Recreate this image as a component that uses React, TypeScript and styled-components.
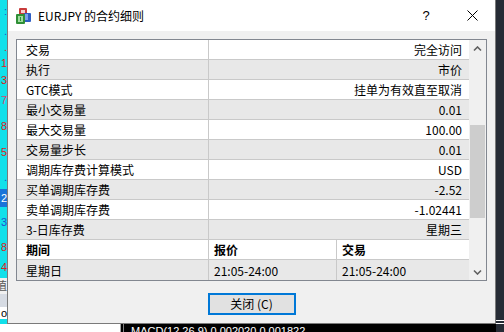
import React from 'react'
import styled, { createGlobalStyle } from 'styled-components'

const GlobalStyle = createGlobalStyle`
  html, body {
    margin: 0;
    padding: 0;
  }
  body {
    width: 504px;
    height: 332px;
    overflow: hidden;
    background: #000;
    font-family: "Noto Sans CJK SC", "Liberation Sans", sans-serif;
  }
`

const specs = [
  { label: '交易', value: '完全访问' },
  { label: '执行', value: '市价' },
  { label: 'GTC模式', value: '挂单为有效直至取消' },
  { label: '最小交易量', value: '0.01' },
  { label: '最大交易量', value: '100.00' },
  { label: '交易量步长', value: '0.01' },
  { label: '调期库存费计算模式', value: 'USD' },
  { label: '买单调期库存费', value: '-2.52' },
  { label: '卖单调期库存费', value: '-1.02441' },
  { label: '3-日库存费', value: '星期三' },
]

const ticks = [
  { h: 22, t: ':', c: '#2050d0' },
  { h: 18, t: '.', c: '#2050d0' },
  { h: 15, t: '.', c: '#e02020' },
  { h: 17, t: '1', c: '#e02020' },
  { h: 16, t: '3', c: '#e02020' },
  { h: 24, t: '7', c: '#e04070' },
  { h: 28, t: '8', c: '#e02020' },
  { h: 25, t: '5', c: '#e02020' },
  { h: 24, t: '.', c: '#2050d0' },
  { h: 18, t: '2', c: '#fff', bg: '#1a73d9' },
  { h: 30, t: '3', c: '#2050d0' },
  { h: 20, t: '8', c: '#e02020' },
  { h: 21, t: '4', c: '#e02020' },
  { h: 16, t: '值', c: '#555', bg: '#f0f0f0' },
  { h: 13, t: '', c: '#000', bg: '#d6dbe3' },
  { h: 12, t: 'o', c: '#000', bg: '#fff' },
]

function AppIcon() {
  return (
    <svg width="16" height="16" viewBox="0 0 16 16">
      <rect x="3" y="0" width="8" height="7" rx="1" fill="#c83c3c" />
      <rect x="5" y="2" width="4" height="3" fill="#f4d0d0" />
      <rect x="8" y="5" width="7" height="9" rx="1" fill="#2f5fc4" />
      <rect x="9" y="6" width="3" height="6" fill="#7aa0ea" />
      <rect x="0" y="6" width="9" height="10" rx="1" fill="#2f8f36" />
      <rect x="2" y="8" width="5" height="6" fill="#9fdc9f" />
      <rect x="4" y="9" width="1" height="4" fill="#2f8f36" />
    </svg>
  )
}

function Chevron({ down }: { down?: boolean }) {
  return (
    <svg width="9" height="6" viewBox="0 0 9 6">
      <path
        d={down ? 'M1 1.5 L4.5 5 L8 1.5' : 'M1 4.5 L4.5 1 L8 4.5'}
        fill="none"
        stroke="#606060"
        strokeWidth="1.6"
      />
    </svg>
  )
}

export default function App() {
  return (
    <>
      <GlobalStyle />
      <Desktop>
        <PriceScale>
          {ticks.map((tk, i) => (
            <Tick key={i} $h={tk.h} $color={tk.c} $bg={tk.bg}>
              {tk.t}
            </Tick>
          ))}
        </PriceScale>

        <Dialog>
          <TitleBar>
            <AppIcon />
            <TitleText>EURJPY 的合约细则</TitleText>
            <TitleButton>?</TitleButton>
            <TitleButton>
              <svg width="11" height="11" viewBox="0 0 11 11">
                <path d="M0.5 0.5 L10.5 10.5 M10.5 0.5 L0.5 10.5" stroke="#000" strokeWidth="1" />
              </svg>
            </TitleButton>
          </TitleBar>

          <Body>
            <Frame>
              <Rows>
                {specs.map((s, i) => (
                  <SpecRow key={s.label} $alt={i % 2 === 1}>
                    <LabelCell>{s.label}</LabelCell>
                    <ValueCell>{s.value}</ValueCell>
                  </SpecRow>
                ))}
                <PeriodRow>
                  <PeriodCell $bold $first>期间</PeriodCell>
                  <PeriodCell $bold>报价</PeriodCell>
                  <PeriodCell $bold $last>交易</PeriodCell>
                </PeriodRow>
                <PeriodRow $alt $end>
                  <PeriodCell $first>星期日</PeriodCell>
                  <PeriodCell>21:05-24:00</PeriodCell>
                  <PeriodCell $last>21:05-24:00</PeriodCell>
                </PeriodRow>
              </Rows>
              <ScrollBar>
                <ArrowButton>
                  <Chevron />
                </ArrowButton>
                <Track>
                  <Thumb />
                </Track>
                <ArrowButton>
                  <Chevron down />
                </ArrowButton>
              </ScrollBar>
            </Frame>
            <CloseButton>关闭 (C)</CloseButton>
          </Body>
        </Dialog>

        <SideStrip>
          <Lines />
        </SideStrip>

        <BottomBar>
          <WhitePane />
          <ChartPane>MACD(12,26,9) 0.002020 0.001822</ChartPane>
        </BottomBar>
      </Desktop>
    </>
  )
}

const Desktop = styled.div`
  display: grid;
  grid-template-columns: 7px 489px 8px;
  grid-template-rows: 324px 8px;
  width: 504px;
  height: 332px;
  overflow: hidden;
`

const PriceScale = styled.div`
  display: flex;
  flex-direction: column;
  background: #12e0ea;
  overflow: hidden;
`

const Tick = styled.div<{ $h: number; $color: string; $bg?: string }>`
  height: ${(p) => p.$h}px;
  flex: none;
  display: flex;
  align-items: center;
  justify-content: flex-end;
  color: ${(p) => p.$color};
  background: ${(p) => p.$bg || 'transparent'};
  font: 11px "Liberation Sans", "Noto Sans CJK SC", sans-serif;
  line-height: 1;
  overflow: hidden;
`

const Dialog = styled.div`
  display: flex;
  flex-direction: column;
  background: #f0f0f0;
  border: 1px solid #7a7a7a;
  border-top: none;
  min-height: 0;
`

const TitleBar = styled.div`
  height: 31px;
  flex: none;
  display: flex;
  align-items: center;
  background: #fff;
  padding-left: 8px;
`

const TitleText = styled.div`
  flex: 1;
  margin-left: 6px;
  font-size: 12px;
  color: #000;
  line-height: 1;
`

const TitleButton = styled.div`
  width: 46px;
  height: 31px;
  display: flex;
  align-items: center;
  justify-content: center;
  font: 13px "Liberation Sans", sans-serif;
  color: #000;
`

const Body = styled.div`
  flex: 1;
  display: flex;
  flex-direction: column;
  padding: 8px 8px 8px;
`

const Frame = styled.div`
  height: 242px;
  display: flex;
  border: 1px solid #828790;
  background: #fff;
  box-sizing: border-box;
`

const Rows = styled.div`
  flex: 1;
  display: flex;
  flex-direction: column;
`

const SpecRow = styled.div<{ $alt?: boolean }>`
  height: 20px;
  flex: none;
  display: grid;
  grid-template-columns: 192px 1fr;
  background: ${(p) => (p.$alt ? '#e8e8e8' : '#fff')};
  border-bottom: 1px solid #c9c9c9;
  box-sizing: border-box;
  font-size: 12px;
  color: #000;
`

const LabelCell = styled.div`
  display: flex;
  align-items: center;
  padding-left: 9px;
  border-right: 1px solid #c9c9c9;
  white-space: nowrap;
`

const ValueCell = styled.div`
  display: flex;
  align-items: center;
  justify-content: flex-end;
  padding-right: 7px;
  white-space: nowrap;
`

const PeriodRow = styled.div<{ $alt?: boolean; $end?: boolean }>`
  height: 20px;
  flex: none;
  display: grid;
  grid-template-columns: 192px 128px 1fr;
  background: ${(p) => (p.$alt ? '#e8e8e8' : '#fff')};
  border-bottom: ${(p) => (p.$end ? 'none' : '1px solid #c9c9c9')};
  box-sizing: border-box;
  font-size: 12px;
  color: #000;
`

const PeriodCell = styled.div<{ $bold?: boolean; $first?: boolean; $last?: boolean }>`
  display: flex;
  align-items: center;
  padding-left: ${(p) => (p.$first ? 9 : 5)}px;
  font-weight: ${(p) => (p.$bold ? 700 : 400)};
  border-right: ${(p) => (p.$last ? 'none' : '1px solid #c9c9c9')};
  white-space: nowrap;
`

const ScrollBar = styled.div`
  width: 17px;
  flex: none;
  display: flex;
  flex-direction: column;
  background: #f0f0f0;
`

const ArrowButton = styled.div`
  height: 17px;
  flex: none;
  display: flex;
  align-items: center;
  justify-content: center;
`

const Track = styled.div`
  flex: 1;
  padding-top: 68px;
`

const Thumb = styled.div`
  height: 93px;
  margin: 0 1px;
  background: #cdcdcd;
`

const CloseButton = styled.button`
  align-self: center;
  width: 88px;
  height: 22px;
  margin-top: 12px;
  padding: 0;
  border: 2px solid #0078d7;
  background: #e1e1e1;
  color: #000;
  font: 12px "Noto Sans CJK SC", "Liberation Sans", sans-serif;
  line-height: 1;
`

const SideStrip = styled.div`
  grid-row: 1 / 3;
  grid-column: 3;
  background: #262b35;
  display: flex;
  flex-direction: column;
  justify-content: flex-end;
  padding-bottom: 8px;
`

const Lines = styled.div`
  height: 2px;
  border-top: 1px solid #fff;
  border-bottom: 1px solid #fff;
`

const BottomBar = styled.div`
  grid-row: 2;
  grid-column: 1 / 3;
  display: flex;
  overflow: hidden;
`

const WhitePane = styled.div`
  width: 120px;
  flex: none;
  background: #fff;
  border-right: 1px solid #a0a0a0;
`

const ChartPane = styled.div`
  flex: 1;
  background: #000;
  border-left: 2px solid #000;
  box-shadow: inset 1px 0 0 #808080;
  padding: 1px 0 0 8px;
  color: #fff;
  font: 11px "Liberation Sans", sans-serif;
  white-space: nowrap;
  line-height: 12px;
`
